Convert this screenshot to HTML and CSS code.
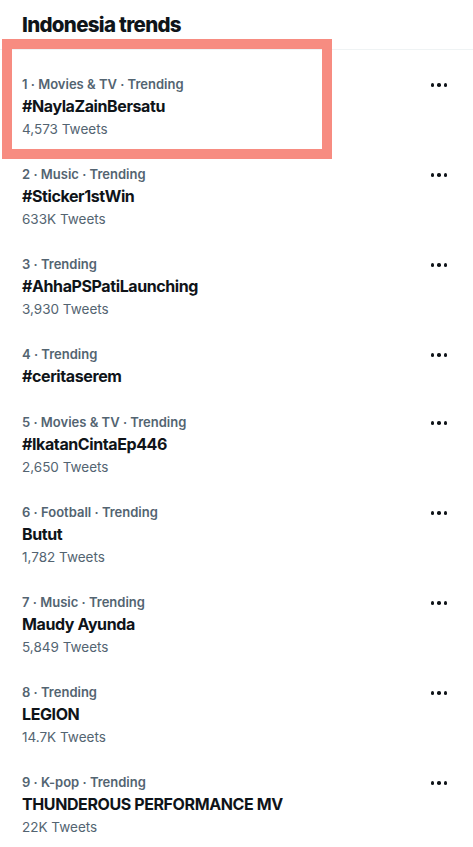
FILE: index.html
```html
<!DOCTYPE html>
<html lang="en">
<head>
  <meta charset="UTF-8">
  <title>Indonesia trends</title>
  <meta name="viewport" content="width=device-width, initial-scale=1.0">
  <link rel="stylesheet" href="styles.css">
</head>
<body>
  <div class="page">
    <h1 class="heading">Indonesia trends</h1>

    <ul class="trends">
      <li class="trend">
        <div class="trend-text">
          <p class="meta">1 · Movies &amp; TV · Trending</p>
          <p class="name">#NaylaZainBersatu</p>
          <p class="count">4,573 Tweets</p>
        </div>
        <span class="more"><i></i><i></i><i></i></span>
      </li>
      <li class="trend">
        <div class="trend-text">
          <p class="meta">2 · Music · Trending</p>
          <p class="name">#Sticker1stWin</p>
          <p class="count">633K Tweets</p>
        </div>
        <span class="more"><i></i><i></i><i></i></span>
      </li>
      <li class="trend">
        <div class="trend-text">
          <p class="meta">3 · Trending</p>
          <p class="name">#AhhaPSPatiLaunching</p>
          <p class="count">3,930 Tweets</p>
        </div>
        <span class="more"><i></i><i></i><i></i></span>
      </li>
      <li class="trend">
        <div class="trend-text">
          <p class="meta">4 · Trending</p>
          <p class="name">#ceritaserem</p>
        </div>
        <span class="more"><i></i><i></i><i></i></span>
      </li>
      <li class="trend">
        <div class="trend-text">
          <p class="meta">5 · Movies &amp; TV · Trending</p>
          <p class="name">#IkatanCintaEp446</p>
          <p class="count">2,650 Tweets</p>
        </div>
        <span class="more"><i></i><i></i><i></i></span>
      </li>
      <li class="trend">
        <div class="trend-text">
          <p class="meta">6 · Football · Trending</p>
          <p class="name">Butut</p>
          <p class="count">1,782 Tweets</p>
        </div>
        <span class="more"><i></i><i></i><i></i></span>
      </li>
      <li class="trend">
        <div class="trend-text">
          <p class="meta">7 · Music · Trending</p>
          <p class="name">Maudy Ayunda</p>
          <p class="count">5,849 Tweets</p>
        </div>
        <span class="more"><i></i><i></i><i></i></span>
      </li>
      <li class="trend">
        <div class="trend-text">
          <p class="meta">8 · Trending</p>
          <p class="name">LEGION</p>
          <p class="count">14.7K Tweets</p>
        </div>
        <span class="more"><i></i><i></i><i></i></span>
      </li>
      <li class="trend">
        <div class="trend-text">
          <p class="meta">9 · K-pop · Trending</p>
          <p class="name">THUNDEROUS PERFORMANCE MV</p>
          <p class="count">22K Tweets</p>
        </div>
        <span class="more"><i></i><i></i><i></i></span>
      </li>
    </ul>

    <div class="highlight"></div>
  </div>
</body>
</html>
```

FILE: styles.css
```css
:root {
  --text: #0f1419;
  --muted: #536471;
  --line: #eff3f4;
  --mark: #f78c81;
}

* {
  box-sizing: border-box;
}

body {
  margin: 0;
  background: #fff;
  color: var(--text);
  font-family: Inter, "Noto Sans", sans-serif;
}

.page {
  position: relative;
  min-height: 847px;
}

.heading {
  margin: 0;
  padding: 11px 22px 0;
  height: 50px;
  font-size: 20.5px;
  line-height: 28px;
  font-weight: 800;
  letter-spacing: -0.7px;
  border-bottom: 1px solid var(--line);
}

.trends {
  list-style: none;
  margin: 0;
  padding: 11px 0 0;
}

.trend {
  display: flex;
  justify-content: space-between;
  align-items: flex-start;
  padding: 12px 26px 11px 22px;
}

.trend p {
  margin: 0;
}

.meta {
  font-size: 13px;
  line-height: 22px;
  font-weight: 600;
  color: var(--muted);
}

.name {
  font-size: 16px;
  line-height: 23px;
  font-weight: 700;
  letter-spacing: -0.4px;
}

.count {
  font-size: 13.5px;
  line-height: 22px;
  color: var(--muted);
}

.more {
  display: flex;
  gap: 3px;
  margin-top: 10px;
}

.more i {
  width: 3.5px;
  height: 3.5px;
  border-radius: 50%;
  background: var(--text);
}

/* annotation box drawn over the first trend */
.highlight {
  position: absolute;
  left: 2px;
  top: 39px;
  width: 330px;
  height: 120px;
  border: 10px solid var(--mark);
}
```
